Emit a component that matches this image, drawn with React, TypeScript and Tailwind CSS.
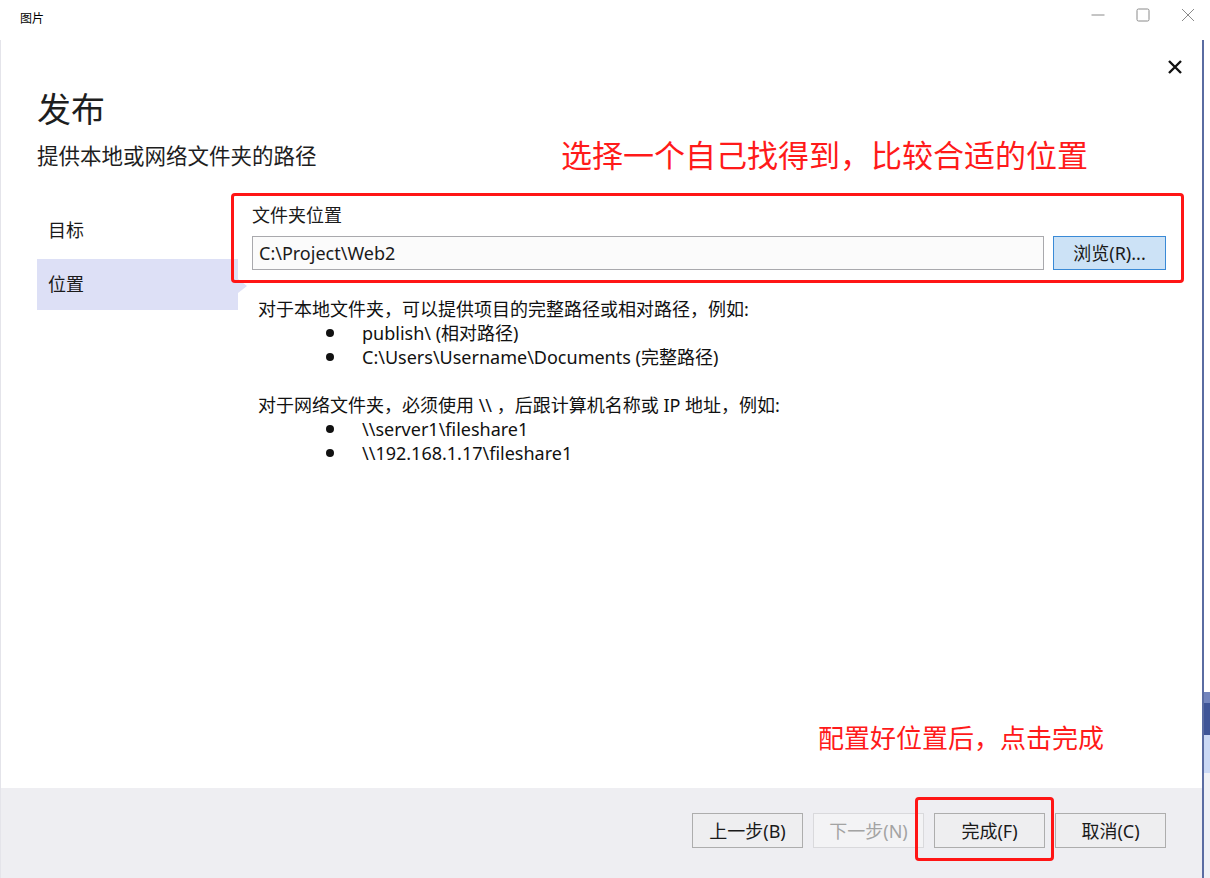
import React from "react";

const FONT = { fontFamily: '"Noto Sans", "Noto Sans CJK SC", sans-serif' };

function FooterButton({ label, disabled }: { label: string; disabled?: boolean }) {
  return (
    <button
      className={
        disabled
          ? "w-[111px] h-[35px] border border-[#d9d9dc] bg-[#f3f3f5] text-[#a3a3a3] text-[18px] leading-none"
          : "w-[111px] h-[35px] border border-[#adadad] bg-[#eeeef0] text-[#1a1a1a] text-[18px] leading-none"
      }
    >
      {label}
    </button>
  );
}

function Bullet({ children }: { children: React.ReactNode }) {
  return (
    <div className="flex items-center h-[24px]">
      <span className="ml-[68px] mr-[28px] w-[8px] h-[8px] rounded-full bg-[#111]" />
      <span>{children}</span>
    </div>
  );
}

export default function App() {
  return (
    <div className="relative w-[1210px] h-[878px] bg-white flex flex-col overflow-hidden text-[#1a1a1a]" style={FONT}>
      {/* title bar */}
      <div className="h-[40px] flex items-start shrink-0">
        <div className="h-[38px] flex items-center pl-[20px] text-[12px] text-black flex-1">图片</div>
        <div className="flex h-[30px]">
          <div className="w-[45px] h-[30px] flex items-center justify-center">
            <svg width="14" height="14" viewBox="0 0 14 14">
              <line x1="0.5" y1="7" x2="13.5" y2="7" stroke="#8a8a8a" strokeWidth="1" />
            </svg>
          </div>
          <div className="w-[45px] h-[30px] flex items-center justify-center">
            <svg width="14" height="14" viewBox="0 0 14 14">
              <rect x="1" y="1" width="12" height="12" rx="1.5" fill="none" stroke="#8a8a8a" strokeWidth="1" />
            </svg>
          </div>
          <div className="w-[45px] h-[30px] flex items-center justify-center">
            <svg width="14" height="14" viewBox="0 0 14 14">
              <path d="M1 1 L13 13 M13 1 L1 13" stroke="#8a8a8a" strokeWidth="1" fill="none" />
            </svg>
          </div>
        </div>
      </div>

      {/* body */}
      <div className="flex-1 flex min-h-0">
        <div className="w-[1202px] flex flex-col border-l border-[#e4e4ea]">
          <div className="flex-1 flex flex-col pl-[36px] pr-[36px] pt-[19px]">
            <div className="flex justify-between items-start">
              <div className="flex flex-col">
                <div className="mt-[28px] text-[34px] leading-[44px] text-[#1e1e1e]">发布</div>
                <div className="mt-[11px] text-[21.5px] leading-[28px] text-[#1e1e1e]">提供本地或网络文件夹的路径</div>
              </div>
              <div className="-mr-[17px] w-[16px] h-[16px]">
                <svg width="16" height="16" viewBox="0 0 16 16">
                  <path d="M2 2 L14 14 M14 2 L2 14" stroke="#111" strokeWidth="2.4" fill="none" />
                </svg>
              </div>
            </div>

            <div className="mt-[33px] flex">
              <div className="w-[201px] pt-[2px] flex flex-col gap-[3px] text-[18px]">
                <div className="h-[51px] flex items-center pl-[11px]">目标</div>
                <div className="relative h-[51px] flex items-center pl-[11px] bg-[#dde0f6]">
                  位置
                  <span className="absolute left-full top-[20px] w-0 h-0 border-l-[9px] border-l-[#dde0f6] border-y-[7px] border-y-transparent" />
                </div>
              </div>
              <div className="ml-[14px] flex-1 flex flex-col">
                <div className="text-[18px] leading-[24px]">文件夹位置</div>
                <div className="mt-[9px] flex gap-[9px]">
                  <div className="flex-1 h-[34px] border border-[#a9a9ad] bg-[#fbfbfb] flex items-center pl-[6px] text-[18px]">
                    C:\Project\Web2
                  </div>
                  <button className="w-[113px] h-[34px] border border-[#3a8ad6] bg-[#cce2f6] text-[18px] leading-none text-[#1a1a1a]">
                    浏览(R)...
                  </button>
                </div>
                <div className="mt-[27px] ml-[6px] text-[18px] leading-[24px] text-[#111]">
                  <div>对于本地文件夹，可以提供项目的完整路径或相对路径，例如:</div>
                  <Bullet>publish\ (相对路径)</Bullet>
                  <Bullet>C:\Users\Username\Documents (完整路径)</Bullet>
                  <div className="h-[24px]" />
                  <div>对于网络文件夹，必须使用 \\ ，后跟计算机名称或 IP 地址，例如:</div>
                  <Bullet>\\server1\fileshare1</Bullet>
                  <Bullet>\\192.168.1.17\fileshare1</Bullet>
                </div>
              </div>
            </div>
          </div>

          {/* footer */}
          <div className="h-[90px] shrink-0 bg-[#eeeef2] flex justify-end items-start pt-[25px] pr-[36px] gap-[10px]">
            <FooterButton label="上一步(B)" />
            <FooterButton label="下一步(N)" disabled />
            <FooterButton label="完成(F)" />
            <FooterButton label="取消(C)" />
          </div>
        </div>
        <div className="w-[2px] bg-[#5a6ca2]" />
        <div className="flex-1 flex flex-col">
          <div className="h-[652px] bg-white" />
          <div className="h-[11px] bg-[#7385bd]" />
          <div className="h-[32px] bg-[#3f5597]" />
          <div className="h-[38px] bg-[#cad8f4]" />
          <div className="flex-1 bg-[#eef0f5]" />
        </div>
      </div>

      {/* annotations */}
      <div className="absolute left-[231px] top-[193px] w-[953px] h-[90px] border-[3px] border-[#ff1515] rounded-[4px]" />
      <div className="absolute left-[915px] top-[797px] w-[139px] h-[64px] border-[3px] border-[#ff1515] rounded-[4px]" />
      <div className="absolute left-[561px] top-[135px] text-[31px] leading-[40px] text-[#ff1a1a] whitespace-nowrap">
        选择一个自己找得到，比较合适的位置
      </div>
      <div className="absolute left-[818px] top-[721px] text-[26px] leading-[34px] text-[#ff1a1a] whitespace-nowrap">
        配置好位置后，点击完成
      </div>
    </div>
  );
}
